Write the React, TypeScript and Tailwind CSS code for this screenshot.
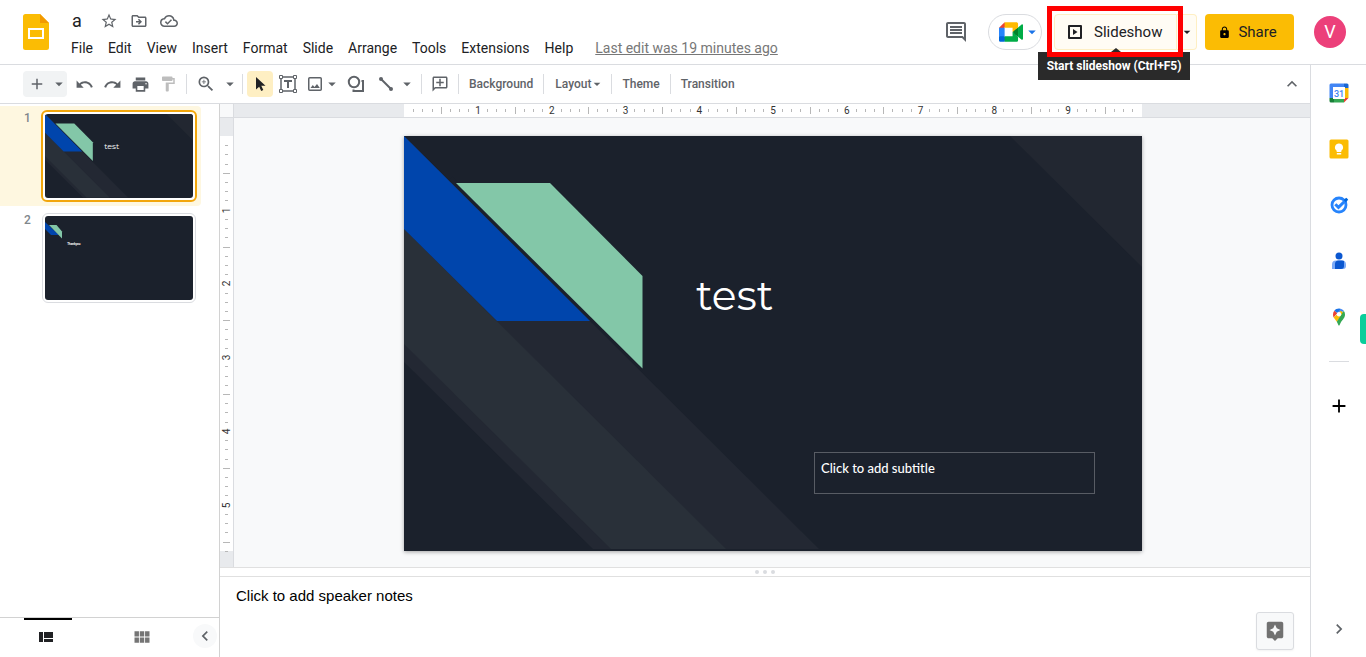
import { useState } from 'react';
import type { ReactNode } from 'react';
import {
  MdAdd,
  MdArrowDropDown,
  MdAssistant,
  MdChevronLeft,
  MdChevronRight,
  MdFormatPaint,
  MdKeyboardArrowUp,
  MdLock,
  MdOutlineAddComment,
  MdOutlineCloudDone,
  MdOutlineComment,
  MdOutlineDriveFileMove,
  MdPrint,
  MdRedo,
  MdStarBorder,
  MdUndo,
  MdViewModule,
  MdZoomIn,
} from 'react-icons/md';

const menus = ['File', 'Edit', 'View', 'Insert', 'Format', 'Slide', 'Arrange', 'Tools', 'Extensions', 'Help'];

function SlidesLogo() {
  return (
    <svg width="26" height="36" viewBox="0 0 26 36" aria-hidden="true">
      <path d="M2.5 0H17l9 9v24.5a2.5 2.5 0 0 1-2.5 2.5h-21A2.5 2.5 0 0 1 0 33.5v-31A2.5 2.5 0 0 1 2.5 0z" fill="#fbbc04" />
      <path d="M17 0l9 9h-9z" fill="#f29900" />
      <path d="M5 14h16v11H5zM7 16v7h12v-7z" fill="#fff" fillRule="evenodd" />
    </svg>
  );
}

function MeetIcon() {
  return (
    <svg width="24" height="20" viewBox="0 0 87.5 72" aria-hidden="true">
      <path fill="#00832d" d="M49.5 36l8.53 9.75 11.47 7.33 2-17.02-2-16.64-11.69 6.44z" />
      <path fill="#0066da" d="M0 51.5V66c0 3.315 2.685 6 6 6h14.5l3-10.96-3-9.54-9.95-3z" />
      <path fill="#e94235" d="M20.5 0L0 20.5l10.55 3 9.95-3 2.95-9.41z" />
      <path fill="#2684fc" d="M20.5 20.5H0v31h20.5z" />
      <path fill="#00ac47" d="M82.6 8.68L69.5 19.42v33.66l13.16 10.79c1.97 1.54 4.85.135 4.85-2.37V11c0-2.535-2.945-3.925-4.91-2.32zM49.5 36v15.5h-29V72h43c3.315 0 6-2.685 6-6V53.08z" />
      <path fill="#ffba00" d="M63.5 0h-43v20.5h29V36l20-16.57V6c0-3.315-2.685-6-6-6z" />
    </svg>
  );
}

function SlideshowIcon() {
  return (
    <svg width="14" height="14" viewBox="0 0 14 14" aria-hidden="true">
      <path d="M1 1h12v12H1z" fill="none" stroke="#202124" strokeWidth="2" strokeLinejoin="round" />
      <path d="M5 4v6l4.500-3z" fill="#202124" />
    </svg>
  );
}

function CursorIcon() {
  return (
    <svg width="18" height="18" viewBox="0 0 18 18" aria-hidden="true">
      <path d="M5 2v12.5l3.2-2.8 2 4.3 2.1-1-2-4.2H14.5z" fill="#202124" />
    </svg>
  );
}

function TextBoxIcon() {
  return (
    <svg width="18" height="18" viewBox="0 0 18 18" fill="none" stroke="#5f6368" aria-hidden="true">
      <path d="M4 2h10M4 16h10M2 4v10M16 4v10" strokeWidth="1.5" />
      <path d="M.5.5h3v3h-3zM14.5.5h3v3h-3zM.5 14.5h3v3h-3zM14.5 14.5h3v3h-3z" />
      <path d="M5 6h8M9 6v7" strokeWidth="2" />
    </svg>
  );
}

function ImageIcon() {
  return (
    <svg width="18" height="18" viewBox="0 0 18 18" aria-hidden="true">
      <rect x="2.75" y="2.75" width="12.5" height="12.5" rx="1" fill="none" stroke="#5f6368" strokeWidth="1.5" />
      <path d="M4.500 13l2.300-3 1.700 2 2.500-3 2.800 4z" fill="#5f6368" />
    </svg>
  );
}

function ShapesIcon() {
  return (
    <svg width="18" height="18" viewBox="0 0 18 18" fill="none" stroke="#5f6368" strokeWidth="2" aria-hidden="true">
      <circle cx="7" cy="7" r="5.2" />
      <path d="M14.500 6H16v10H6.500v-1.500" />
    </svg>
  );
}

function LineIcon() {
  return (
    <svg width="18" height="18" viewBox="0 0 18 18" aria-hidden="true">
      <path d="M4 4l10 10" stroke="#5f6368" strokeWidth="2" />
      <circle cx="4" cy="4" r="2" fill="#5f6368" />
      <circle cx="14" cy="14" r="2" fill="#5f6368" />
    </svg>
  );
}

function CalendarIcon() {
  return (
    <svg width="20" height="20" viewBox="0 0 20 20" aria-hidden="true">
      <path d="M2 .5h13v4.5H5v10H.5V2A1.5 1.5 0 0 1 2 .5z" fill="#4285f4" />
      <path d="M15 .5h3A1.5 1.5 0 0 1 19.5 2v3H15z" fill="#1967d2" />
      <path d="M15 5h4.5v10H15z" fill="#fbbc04" />
      <path d="M5 15h10v4.5H5z" fill="#34a853" />
      <path d="M.5 15H5v4.5H2A1.5 1.5 0 0 1 .5 18z" fill="#188038" />
      <path d="M15 15h4.5L15 19.5z" fill="#ea4335" />
      <path d="M4 4h12v12H4z" fill="#fff" />
      <text x="10" y="13.5" textAnchor="middle" fontSize="9" fontFamily="Roboto, sans-serif" fontWeight="500" fill="#4285f4">31</text>
    </svg>
  );
}

function KeepIcon() {
  return (
    <svg width="20" height="20" viewBox="0 0 20 20" aria-hidden="true">
      <rect x=".5" y=".5" width="19" height="19" rx="1.5" fill="#fbbc04" />
      <path d="M10 4.5a4 4 0 0 0-2.3 7.3V13h4.6v-1.2A4 4 0 0 0 10 4.5zM7.8 14h4.4v1.5H7.8z" fill="#fff" />
    </svg>
  );
}

function TasksIcon() {
  return (
    <svg width="20" height="20" viewBox="0 0 20 20" fill="none" aria-hidden="true">
      <circle cx="10" cy="10" r="7" stroke="#2684fc" strokeWidth="2.8" />
      <path d="M6.3 9.2l3.2 3.200L17.500 4.500" stroke="#2684fc" strokeWidth="3" />
      <path d="M14.7 5l2.600-2.300 1.900 1.900-2.300 2.600z" fill="#0066da" />
    </svg>
  );
}

function ContactsIcon() {
  return (
    <svg width="20" height="20" viewBox="0 0 20 20" aria-hidden="true">
      <circle cx="10" cy="5" r="3.5" fill="#0b57d0" />
      <path d="M3 18v-4.5A4 4 0 0 1 7 9.5h6a4 4 0 0 1 4 4V15a3 3 0 0 1-3 3z" fill="#7baaf7" />
      <path d="M6 18v-5a3.5 3.5 0 0 1 3.5-3.5H13a4 4 0 0 1 2 .6V15a3 3 0 0 1-3 3z" fill="#0b57d0" />
    </svg>
  );
}

function MapsIcon() {
  return (
    <svg width="20" height="20" viewBox="0 0 20 20" aria-hidden="true">
      <path d="M10 1.5c-1.9 0-3.6.8-4.7 2.2l3 2.5 4-4.3A6 6 0 0 0 10 1.5z" fill="#1a73e8" />
      <path d="M5.3 3.7A6 6 0 0 0 4 7.5c0 1.2.2 2.2.7 3.1l3.6-4.4z" fill="#ea4335" />
      <path d="M12.3 1.9L8.3 6.2 10 7.5l4.8-3.8a6 6 0 0 0-2.5-1.8z" fill="#4285f4" />
      <path d="M4.7 10.6c.8 1.5 2.1 2.6 3.1 4.1L14.8 6l-3-2.3z" fill="#fbbc04" />
      <path d="M7.8 14.7c1 1.6 1.5 4 2.2 4s1.2-2.4 2.2-4c1.4-2.1 3.8-3.7 3.8-7.2 0-1.4-.4-2.7-1.2-3.8z" fill="#34a853" />
      <circle cx="10" cy="7.3" r="2.2" fill="#fff" />
    </svg>
  );
}

const sideApps = [
  { name: 'Calendar', icon: <CalendarIcon /> },
  { name: 'Keep', icon: <KeepIcon /> },
  { name: 'Tasks', icon: <TasksIcon /> },
  { name: 'Contacts', icon: <ContactsIcon /> },
  { name: 'Maps', icon: <MapsIcon /> },
];

function TitleArt() {
  return (
    <svg viewBox="0 0 738 415" className="block w-full h-full" preserveAspectRatio="none" aria-hidden="true">
      <rect width="738" height="415" fill="#1b212c" />
      <path d="M606 0h132v131z" fill="#222731" />
      <path d="M0 0l415 413H189L0 226z" fill="#232833" />
      <path d="M0 93l322 320H207L0 208z" fill="#293039" />
      <path d="M0 0v93l93 92h93z" fill="#0045ac" />
      <path d="M47 42l192 192" stroke="#1b212c" strokeWidth="4" />
      <path d="M52 47h94l92.500 93v92.500z" fill="#83c7a8" />
    </svg>
  );
}

function EndArt() {
  return (
    <svg viewBox="0 0 148 84" className="block w-full h-full" aria-hidden="true">
      <rect width="148" height="84" fill="#1b212c" />
      <path d="M0 6v7l6 6h8z" fill="#0045ac" />
      <path d="M4 9h7.5l5.500 6.500v7z" fill="#83c7a8" />
    </svg>
  );
}

function ToolButton({ label, className = 'w-7', children }: { label: string; className?: string; children: ReactNode }) {
  return (
    <button aria-label={label} className={`h-[26px] flex shrink-0 items-center justify-center rounded-sm ${className}`}>
      {children}
    </button>
  );
}

function Separator() {
  return <div className="w-px h-5 mx-1 shrink-0 bg-[#dadce0]" />;
}

function HorizontalRuler() {
  const ticks = Array.from({ length: 79 }, (_, i) => i + 1);
  return (
    <div className="flex-1 h-[14px] flex justify-center pl-0.5 bg-[#e8eaed] border-b border-[#dadce0]">
      <div className="w-[738px] flex items-center px-[5px] bg-white">
        {ticks.map((t) => (
          <div key={t} className="flex-1 w-0 flex justify-center">
            {t % 8 === 0 ? (
              <span className="text-[10px] leading-[13px] text-[#333]">{t / 8}</span>
            ) : (
              <span className={t % 4 === 0 ? 'w-px h-[7px] bg-[#b7b7b7]' : 'w-px h-[3px] bg-[#b7b7b7]'} />
            )}
          </div>
        ))}
      </div>
    </div>
  );
}

function VerticalRuler() {
  const ticks = Array.from({ length: 45 }, (_, i) => i + 1);
  return (
    <div className="w-[14px] shrink-0 flex flex-col bg-[#e8eaed] border-r border-[#dadce0]">
      <div className="h-[18px] shrink-0" />
      <div className="h-[415px] shrink-0 pt-[5px] bg-white">
        <div className="h-[415px] flex flex-col">
          {ticks.map((t) => (
            <div key={t} className="flex-1 h-0 flex items-center justify-center">
              {t % 8 === 0 ? (
                <span className="-rotate-90 text-[10px] leading-[13px] text-[#333]">{t / 8}</span>
              ) : (
                <span className={t % 4 === 0 ? 'h-px w-[7px] bg-[#b7b7b7]' : 'h-px w-[3px] bg-[#b7b7b7]'} />
              )}
            </div>
          ))}
        </div>
      </div>
    </div>
  );
}

function Header() {
  return (
    <header className="h-[65px] shrink-0 flex border-b border-[#dadce0] pl-[23px] pr-5">
      <a href="#home" aria-label="Slides home" className="pt-3.5">
        <SlidesLogo />
      </a>
      <div className="flex-1 min-w-0 pl-[15px] pt-2">
        <div className="h-[26px] flex items-center pl-2 text-[#5f6368]">
          <input aria-label="Document title" defaultValue="a" className="w-[28px] text-lg leading-6 text-[#202124] outline-none" />
          <button aria-label="Star" className="mr-3"><MdStarBorder size={18} /></button>
          <button aria-label="Move" className="mr-3"><MdOutlineDriveFileMove size={18} /></button>
          <button aria-label="Document status"><MdOutlineCloudDone size={18} /></button>
        </div>
        <nav className="h-7 flex items-center gap-px text-[#202124]">
          {menus.map((m) => (
            <button key={m} className="px-[7px] text-sm">{m}</button>
          ))}
          <a href="#history" className="ml-3.5 text-sm text-[#777] underline whitespace-nowrap">Last edit was 19 minutes ago</a>
        </nav>
      </div>
      <div className="flex items-center h-16 shrink-0">
        <button aria-label="Open comment history" className="mr-5 text-[#5f6368]"><MdOutlineComment size={24} /></button>
        <button aria-label="Join a call" className="w-[54px] h-9 mr-3 flex items-center justify-end rounded-full border border-[#dadce0]">
          <MeetIcon />
          <MdArrowDropDown size={18} className="text-[#1a73e8]" />
        </button>
        <div className="relative flex mr-2">
          <button className="w-[123px] h-9 flex items-center pl-[13px] gap-3 rounded-l border border-[#feefc3] bg-[#fffcf4] text-[15px] text-[#202124]">
            <SlideshowIcon />
            Slideshow
          </button>
          <button aria-label="Slideshow options" className="w-5 h-9 flex items-center justify-center rounded-r border border-l-0 border-[#feefc3] bg-[#fffcf4] text-[#202124]">
            <MdArrowDropDown size={16} className="shrink-0" />
          </button>
          <div role="tooltip" className="absolute z-10 top-[38px] -left-4 h-7 w-[152px] flex items-center justify-center bg-[#2a2a2a] text-xs font-bold text-white whitespace-nowrap">
            Start slideshow (Ctrl+F5)
            <span className="absolute -top-1 left-[73px] border-x-[5px] border-b-4 border-x-transparent border-b-[#2a2a2a]" />
          </div>
          <div className="absolute z-20 -top-2 -left-[7px] w-[136px] h-[51px] border-[5px] border-[#ff0000] pointer-events-none" />
        </div>
        <button className="w-[89px] h-9 mr-5 pr-1 flex items-center justify-center gap-[7px] rounded bg-[#fbbc04] text-[15px] text-[#202124]">
          <MdLock size={13} className="text-black" />
          Share
        </button>
        <button aria-label="Account" className="size-8 rounded-full bg-[#ec407a] text-white text-lg">V</button>
      </div>
    </header>
  );
}

function Toolbar() {
  return (
    <div role="toolbar" className="h-[39px] shrink-0 flex items-center pl-[23px] pr-2 border-b border-[#dadce0] text-[#5f6368] text-xs font-medium">
      <div className="flex mr-[3px] rounded-sm bg-[#f1f3f4]">
        <ToolButton label="New slide"><MdAdd size={18} /></ToolButton>
        <ToolButton label="New slide with layout" className="w-4"><MdArrowDropDown size={18} className="shrink-0" /></ToolButton>
      </div>
      <ToolButton label="Undo"><MdUndo size={19} /></ToolButton>
      <ToolButton label="Redo"><MdRedo size={19} /></ToolButton>
      <ToolButton label="Print"><MdPrint size={19} /></ToolButton>
      <ToolButton label="Paint format"><MdFormatPaint size={18} className="text-[#bdbdbd]" /></ToolButton>
      <Separator />
      <ToolButton label="Zoom" className="w-[30px]"><MdZoomIn size={20} /></ToolButton>
      <ToolButton label="Zoom level" className="w-[17px]"><MdArrowDropDown size={18} className="shrink-0" /></ToolButton>
      <Separator />
      <ToolButton label="Select" className="w-[26px] bg-[#feefc3]"><CursorIcon /></ToolButton>
      <ToolButton label="Text box" className="w-[30px]"><TextBoxIcon /></ToolButton>
      <ToolButton label="Insert image" className="w-6"><ImageIcon /></ToolButton>
      <ToolButton label="Image options" className="w-2.5"><MdArrowDropDown size={18} className="shrink-0" /></ToolButton>
      <ToolButton label="Shape" className="w-[38px]"><ShapesIcon /></ToolButton>
      <ToolButton label="Line" className="w-[22px]"><LineIcon /></ToolButton>
      <ToolButton label="Line options" className="w-5"><MdArrowDropDown size={18} /></ToolButton>
      <Separator />
      <ToolButton label="Add comment"><MdOutlineAddComment size={18} className="-scale-x-100" /></ToolButton>
      <Separator />
      <button className="px-1.5">Background</button>
      <Separator />
      <button className="pl-[7px] pr-1 flex items-center">
        Layout
        <MdArrowDropDown size={16} className="-mx-0.5" />
      </button>
      <Separator />
      <button className="px-1.5">Theme</button>
      <Separator />
      <button className="px-1.5">Transition</button>
      <button aria-label="Hide the menus" className="ml-auto"><MdKeyboardArrowUp size={20} /></button>
    </div>
  );
}

function Filmstrip() {
  const [current, setCurrent] = useState(1);
  const slides = [
    { id: 1, art: <TitleArt />, text: 'test', textClass: 'left-[40%] top-[31%] text-[8px] leading-[12px] font-[Montserrat,Inter,sans-serif]' },
    { id: 2, art: <EndArt />, text: 'Thankyou', textClass: 'left-[15%] top-[31%] text-[3px] leading-[5px] font-bold' },
  ];

  return (
    <aside className="w-[220px] shrink-0 flex flex-col border-r border-[#d2d2d2]">
      <div className="flex-1 pt-0.5 pr-[18px] space-y-0.5">
        {slides.map((s) => (
          <div key={s.id} className={`h-[100px] flex items-start pt-1 rounded-r ${current === s.id ? 'bg-[#fef7e0]' : ''}`}>
            <span className="w-[41px] pl-6 text-xs leading-4 font-medium text-[#80868b]">{s.id}</span>
            <button
              onClick={() => setCurrent(s.id)}
              aria-label={`Slide ${s.id}`}
              className={`p-0.5 bg-white ${current === s.id ? 'border-2 rounded-md border-[#f2a60c]' : 'm-px border rounded-md border-[#dadce0]'}`}
            >
              <div className="relative w-[148px] h-[84px] rounded-[3px] overflow-hidden">
                {s.art}
                <span className={`absolute text-white ${s.textClass}`}>{s.text}</span>
              </div>
            </button>
          </div>
        ))}
      </div>
      <div className="h-10 shrink-0 flex border-t border-[#d2d2d2] pl-6">
        <button aria-label="Filmstrip view" className="w-12 flex items-center justify-center border-t-2 border-black pr-1 pb-1 text-[#202124]">
          <svg width="14" height="10" viewBox="0 0 14 10" fill="currentColor" aria-hidden="true">
            <path d="M0 0h4v10H0zM5 0h9v6H5zM5 7h9v3H5z" />
          </svg>
        </button>
        <button aria-label="Grid view" className="w-12 ml-[46px] pb-0.5 flex items-center justify-center text-[#757575]">
          <MdViewModule size={20} />
        </button>
        <button aria-label="Collapse filmstrip" className="ml-auto mr-0.5 mt-1.5 size-6 flex items-center justify-center rounded-full bg-[#f8f9fa] text-[#5f6368]">
          <MdChevronLeft size={20} />
        </button>
      </div>
    </aside>
  );
}

function SlideCanvas() {
  return (
    <main className="flex-1 min-w-0 flex justify-center items-start pl-0.5 pt-[18px] bg-[#f8f9fa]">
      <div className="relative w-[738px] aspect-[738/415] shadow-[0_1px_4px_rgba(0,0,0,0.35)]">
        <TitleArt />
        <h1 className="absolute left-[292px] top-[133px] text-[41px] leading-[52px] font-[Montserrat,Inter,sans-serif] text-white">test</h1>
        <div className="absolute left-[410px] top-[316px] w-[281px] h-[42px] border border-[#585c64] pl-1.5 pt-1.5 font-[Lato,sans-serif] text-[13px] leading-[18px] font-medium text-white">
          Click to add subtitle
        </div>
      </div>
    </main>
  );
}

function Notes() {
  return (
    <section className="shrink-0 border-t border-[#e0e0e0]">
      <div className="h-2 flex items-center justify-center gap-0.5">
        {[0, 1, 2].map((d) => (
          <span key={d} className="w-1 h-1 mx-px rounded-full bg-[#dadce0]" />
        ))}
      </div>
      <div className="h-[81px] border-t border-[#e0e0e0] flex">
        <textarea
          aria-label="Speaker notes"
          placeholder="Click to add speaker notes"
          className="flex-1 resize-none outline-none px-4 pt-2.5 text-[15px] leading-[18px] font-[Liberation_Sans,Arial,sans-serif] placeholder:text-black"
        />
        <button aria-label="Explore" className="size-[38px] mt-[35px] mr-4 flex items-center justify-center rounded-[3px] border border-[#dadce0] bg-[#f8f9fa] shadow-xs text-[#717171]">
          <MdAssistant size={22} />
        </button>
      </div>
    </section>
  );
}

function SidePanel() {
  return (
    <aside className="relative w-14 shrink-0 flex flex-col items-center border-l border-[#dadce0]">
      {sideApps.map((app) => (
        <button key={app.name} aria-label={app.name} className="size-14 shrink-0 flex items-center justify-center">
          {app.icon}
        </button>
      ))}
      <div className="w-5 h-px mt-4 shrink-0 bg-[#dadce0]" />
      <button aria-label="Get add-ons" className="size-14 mt-4 shrink-0 flex items-center justify-center text-black">
        <MdAdd size={22} />
      </button>
      <button aria-label="Hide side panel" className="mt-auto mb-[18px] text-[#5f6368]">
        <MdChevronRight size={20} />
      </button>
      <div className="absolute right-0 top-[249px] w-1.5 h-[30px] rounded-l bg-[#09ce9b]" />
    </aside>
  );
}

export default function App() {
  return (
    <div className="h-screen flex flex-col overflow-hidden bg-white font-[Roboto,sans-serif]">
      <Header />
      <div className="flex-1 min-h-0 flex">
        <div className="flex-1 min-w-0 flex flex-col">
          <Toolbar />
          <div className="flex-1 min-h-0 flex">
            <Filmstrip />
            <div className="flex-1 min-w-0 flex flex-col">
              <div className="flex shrink-0">
                <div className="size-[14px] bg-[#f8f9fa] border-r border-b border-[#dadce0]" />
                <HorizontalRuler />
              </div>
              <div className="flex-1 min-h-0 flex overflow-hidden">
                <VerticalRuler />
                <SlideCanvas />
              </div>
              <Notes />
            </div>
          </div>
        </div>
        <SidePanel />
      </div>
    </div>
  );
}
